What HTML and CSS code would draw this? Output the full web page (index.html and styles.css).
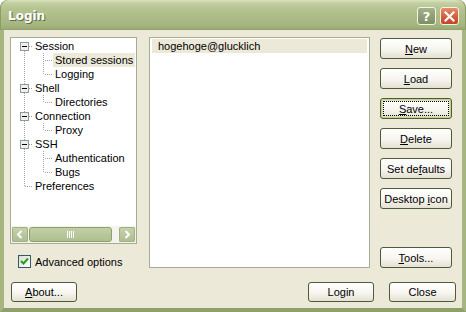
FILE: index.html
```html
<!DOCTYPE html>
<html>
<head>
<meta charset="utf-8">
<link rel="stylesheet" href="styles.css">
</head>
<body>
<div class="window">
  <div class="titlebar">
    <span class="title">Login</span>
    <div class="caps">
      <span class="cap help">?</span>
      <span class="cap close"><svg width="11" height="11" viewBox="0 0 11 11"><path d="M1.5 1.5L9.5 9.5M9.5 1.5L1.5 9.5" stroke="#fff" stroke-width="2.2" stroke-linecap="square"/></svg></span>
    </div>
  </div>
  <div class="body">
    <div class="main">
      <div class="left">
        <div class="tree">
          <div class="rows">
            <div class="row"><svg class="g" width="22" height="14"><path class="dot" d="M13.5 12V14M18 7.5H22"/><rect class="bx" x="9.5" y="3.5" width="8" height="8"/><path d="M11 7.5H16" stroke="#000"/></svg><span class="lbl">Session</span></div>
            <div class="row"><svg class="g" width="42" height="14"><path class="dot" d="M13.5 0V14M32.5 0V14M34 7.5H42"/></svg><span class="lbl sel">Stored sessions</span></div>
            <div class="row"><svg class="g" width="42" height="14"><path class="dot" d="M13.5 0V14M32.5 0V8M34 7.5H42"/></svg><span class="lbl">Logging</span></div>
            <div class="row"><svg class="g" width="22" height="14"><path class="dot" d="M13.5 0V4M13.5 12V14M18 7.5H22"/><rect class="bx" x="9.5" y="3.5" width="8" height="8"/><path d="M11 7.5H16" stroke="#000"/></svg><span class="lbl">Shell</span></div>
            <div class="row"><svg class="g" width="42" height="14"><path class="dot" d="M13.5 0V14M32.5 0V8M34 7.5H42"/></svg><span class="lbl">Directories</span></div>
            <div class="row"><svg class="g" width="22" height="14"><path class="dot" d="M13.5 0V4M13.5 12V14M18 7.5H22"/><rect class="bx" x="9.5" y="3.5" width="8" height="8"/><path d="M11 7.5H16" stroke="#000"/></svg><span class="lbl">Connection</span></div>
            <div class="row"><svg class="g" width="42" height="14"><path class="dot" d="M13.5 0V14M32.5 0V8M34 7.5H42"/></svg><span class="lbl">Proxy</span></div>
            <div class="row"><svg class="g" width="22" height="14"><path class="dot" d="M13.5 0V4M13.5 12V14M18 7.5H22"/><rect class="bx" x="9.5" y="3.5" width="8" height="8"/><path d="M11 7.5H16" stroke="#000"/></svg><span class="lbl">SSH</span></div>
            <div class="row"><svg class="g" width="42" height="14"><path class="dot" d="M13.5 0V14M32.5 0V14M34 7.5H42"/></svg><span class="lbl">Authentication</span></div>
            <div class="row"><svg class="g" width="42" height="14"><path class="dot" d="M13.5 0V14M32.5 0V8M34 7.5H42"/></svg><span class="lbl">Bugs</span></div>
            <div class="row"><svg class="g" width="22" height="14"><path class="dot" d="M13.5 0V8M14 7.5H22"/></svg><span class="lbl">Preferences</span></div>
          </div>
          <div class="hscroll">
            <span class="sbtn"><svg width="16" height="15"><path d="M9.5 4L6 7.5L9.5 11" fill="none" stroke="#fff" stroke-width="2"/></svg></span>
            <span class="thumb"><svg width="10" height="7"><path d="M1.5 0V7M3.5 0V7M5.5 0V7M7.5 0V7" stroke="#fff" stroke-width="1"/></svg></span>
            <span class="track"></span>
            <span class="sbtn"><svg width="16" height="15"><path d="M6.5 4L10 7.5L6.5 11" fill="none" stroke="#fff" stroke-width="2"/></svg></span>
          </div>
        </div>
        <label class="check"><span class="cbox"><svg width="11" height="11" viewBox="0 0 11 11"><path d="M2 5L4.5 7.5L9 2.5" fill="none" stroke="#21A121" stroke-width="2"/></svg></span><span>Advanced options</span></label>
      </div>
      <div class="list">
        <div class="item">hogehoge@glucklich</div>
      </div>
      <div class="buttons">
        <span class="btn"><span><u>N</u>ew</span></span>
        <span class="btn"><span><u>L</u>oad</span></span>
        <span class="btn focus"><span><u>S</u>ave...</span></span>
        <span class="btn"><span><u>D</u>elete</span></span>
        <span class="btn"><span>Set de<u>f</u>aults</span></span>
        <span class="btn"><span>Desktop <u>i</u>con</span></span>
        <span class="btn tools"><span><u>T</u>ools...</span></span>
      </div>
    </div>
    <div class="bottom">
      <span class="btn about"><span><u>A</u>bout...</span></span>
      <span class="spacer"></span>
      <span class="btn login"><span>Login</span></span>
      <span class="btn closeb"><span>Close</span></span>
    </div>
  </div>
</div>
</body>
</html>
```
FILE: styles.css
```css
html, body {
  margin: 0;
  padding: 0;
  background: #ffffff;
}
body {
  font-family: "Liberation Sans", Arial, sans-serif;
  font-size: 11px;
  color: #000;
}
.window {
  width: 466px;
  height: 312px;
  display: flex;
  flex-direction: column;
}
.titlebar {
  height: 30px;
  flex: none;
  display: flex;
  align-items: center;
  border-radius: 8px 8px 0 0;
  background: linear-gradient(#DCE3C0 0px, #C3CFA1 3px, #B6C492 8px, #AEBD88 16px, #A7B782 24px, #9DAE77 28px, #8E9F69 30px);
  box-shadow: inset 1px 0 0 #8C9C68, inset -1px 0 0 #8C9C68;
}
.title {
  padding-left: 8px;
  font-family: "DejaVu Sans", sans-serif;
  font-weight: bold;
  font-size: 12px;
  color: #fff;
  text-shadow: 1px 1px 0 #5E6B44;
  flex: 1;
  margin-top: 2px;
}
.caps {
  display: flex;
  gap: 4px;
  margin-right: 7px;
  margin-top: 2px;
}
.cap {
  width: 19px;
  height: 18px;
  box-sizing: border-box;
  border: 1px solid #F2F4E6;
  border-radius: 3px;
  display: flex;
  align-items: center;
  justify-content: center;
}
.help {
  background: linear-gradient(#A3B08A, #7F8F63);
  color: #fff;
  font-family: "DejaVu Sans", sans-serif;
  font-weight: bold;
  font-size: 13px;
}
.close {
  background: linear-gradient(#E78C6C, #D25A38 60%, #C04828);
}
.body {
  flex: 1;
  background: #ECE9D8;
  border-left: 4px solid #A6B680;
  border-right: 4px solid #A6B680;
  border-bottom: 4px solid #8FA16B;
  padding: 7px 6px 6px 6px;
  display: flex;
  flex-direction: column;
}
.main {
  height: 231px;
  display: flex;
}
.left {
  width: 127px;
  display: flex;
  flex-direction: column;
}
.tree {
  height: 210px;
  box-sizing: border-box;
  border: 1px solid #A5AE92;
  background: #fff;
  display: flex;
  flex-direction: column;
}
.rows {
  flex: 1;
  overflow: hidden;
  padding-top: 1px;
}
.row {
  height: 14px;
  display: flex;
  align-items: center;
  white-space: nowrap;
}
.g {
  flex: none;
  display: block;
  shape-rendering: crispEdges;
}
.dot {
  fill: none;
  stroke: #A0A0A0;
  stroke-dasharray: 1 1;
}
.bx {
  fill: #F0F0EA;
  stroke: #8E9A9C;
}
.lbl {
  padding: 0 2px;
  line-height: 14px;
  height: 14px;
}
.lbl.sel {
  background: #ECE9D8;
  flex: none;
}
.hscroll {
  height: 17px;
  box-sizing: border-box;
  padding: 1px;
  display: flex;
  gap: 1px;
  background: #F5F4EC;
}
.sbtn {
  width: 16px;
  height: 15px;
  border-radius: 2px;
  background: linear-gradient(#C6D2AE, #ADBD91);
  box-shadow: inset 0 0 0 1px #9FB085;
  display: flex;
}
.thumb {
  width: 83px;
  height: 15px;
  box-sizing: border-box;
  border: 1px solid #8D9F6E;
  border-radius: 3px;
  background: linear-gradient(#C3D0A6, #AEBF8E);
  display: flex;
  align-items: center;
  justify-content: center;
}
.track {
  flex: 1;
}
.check {
  margin-top: 11px;
  padding-left: 8px;
  display: flex;
  align-items: center;
  gap: 4px;
  height: 13px;
}
.cbox {
  width: 13px;
  height: 13px;
  box-sizing: border-box;
  border: 1px solid #2F5B66;
  background: linear-gradient(135deg, #DCDBD0, #FFFFFF);
  display: flex;
  align-items: center;
  justify-content: center;
}
.list {
  margin-left: 12px;
  width: 221px;
  box-sizing: border-box;
  border: 1px solid #A5AE92;
  background: #fff;
  padding: 1px 2px 1px 2px;
}
.item {
  height: 14px;
  line-height: 14px;
  padding-left: 6px;
  background: #ECE9D8;
}
.buttons {
  margin-left: 10px;
  width: 72px;
  display: flex;
  flex-direction: column;
  gap: 9px;
  padding-top: 1px;
}
.btn {
  height: 21px;
  flex: none;
  box-sizing: border-box;
  border: 1px solid #4E5A3A;
  border-radius: 3px;
  background: linear-gradient(#FFFFFF, #F6F5EF 55%, #E4E1D2);
  display: flex;
  align-items: center;
  justify-content: center;
  white-space: nowrap;
}
.btn u {
  text-decoration: underline;
  text-underline-offset: 1px;
}
.focus {
  box-shadow: inset 0 0 0 1px #C5D195, inset 0 0 0 2px #DCE4B6;
  outline: 1px dotted #000;
  outline-offset: -4px;
}
.tools {
  margin-top: auto;
}
.bottom {
  margin-top: 14px;
  height: 20px;
  display: flex;
}
.bottom .btn {
  height: 20px;
}
.about {
  margin-left: 1px;
  width: 66px;
}
.spacer {
  flex: 1;
}
.login {
  width: 66px;
  margin-right: 15px;
}
.closeb {
  width: 67px;
}
```
